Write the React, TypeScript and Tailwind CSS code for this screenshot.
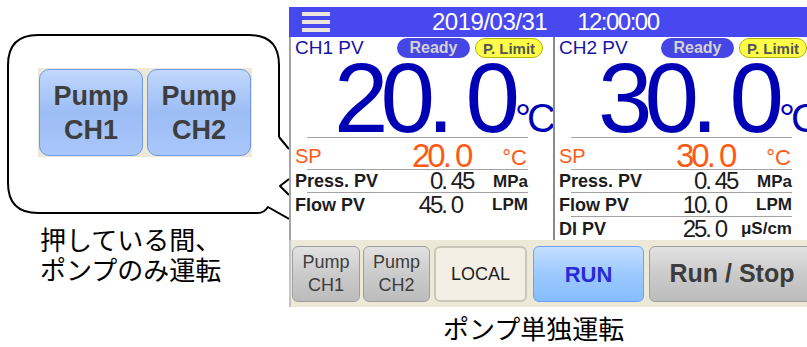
import React from "react";

type Row = { label: string; int: string; frac: string; unit: string };

const screenFont = "font-['Liberation_Sans',Arial,sans-serif]";
const jpFont = "font-['Noto_Sans_CJK_JP','Noto_Sans',sans-serif]";

const Sep = () => <div className="ml-[16px] w-[221px] h-px bg-[#a2a2a2] shrink-0" />;

const Panel = ({ name, pv, sp, rows }: { name: string; pv: string; sp: string; rows: Row[] }) => {
  return (
    <div className="w-[262px] shrink-0 flex flex-col bg-white">
      <div className="h-[22px] flex items-center pl-[4px] shrink-0">
        <span className="w-[102px] text-[19px] leading-[22px] text-[#1414a0]">{name}</span>
        <span className="h-[20px] w-[73px] rounded-full bg-[#4646e6] text-[#d2d2d2] text-[16px] font-bold leading-none flex items-center justify-center">
          Ready
        </span>
        <span className="ml-[5px] h-[20px] w-[68px] rounded-full bg-[#ffff48] border border-[#b4b400] text-[#555555] text-[15px] font-bold leading-none flex items-center justify-center">
          P. Limit
        </span>
      </div>
      <div className="h-[78px] flex items-baseline pl-[43px] text-[#0000b4] shrink-0">
        <span className="text-[98px] leading-[78px] tracking-[-8px] whitespace-pre">{pv}</span>
        <span className="ml-[3px] text-[40px] leading-[78px] tracking-[-4px]">°C</span>
      </div>
      <Sep />
      <div className="h-[31px] flex items-end pl-[4px] pr-[26px] text-[#ff5a14] shrink-0">
        <span className="w-[117px] text-[20px] leading-[20px] pb-[3px]">SP</span>
        <span className="text-[33px] leading-[26px] tracking-[-3px] whitespace-pre">{sp}</span>
        <span className="ml-auto text-[22px] leading-[22px]">°C</span>
      </div>
      {rows.map((r, i) => (
        <React.Fragment key={r.label}>
          <Sep />
          <div
            className={
              "flex items-center pl-[4px] pr-[25px] text-[#1c1c1c] shrink-0 " +
              (i === 0 ? "h-[22px]" : "h-[23px]")
            }
          >
            <span className="w-[123px] text-[18px] font-bold leading-none">{r.label}</span>
            <span className="w-[28px] text-right text-[24px] tracking-[-2px] leading-none whitespace-pre">{r.int}</span>
            <span className="text-[24px] tracking-[-2px] leading-none whitespace-pre">{r.frac}</span>
            <span className="ml-auto text-[17px] font-bold leading-none">{r.unit}</span>
          </div>
        </React.Fragment>
      ))}
    </div>
  );
};

const BigPump = ({ ch }: { ch: string }) => (
  <div className="w-[104px] h-[87px] rounded-[10px] border border-[#6f98e6] bg-gradient-to-b from-[#c2d8fc] via-[#9cbcf5] to-[#a9c7fb] flex flex-col items-center justify-center text-[27px] font-bold leading-[34px] text-[#3e3e3e] font-['Liberation_Sans',Arial,sans-serif]">
    <span>Pump</span>
    <span>{ch}</span>
  </div>
);

const grayBtn =
  "h-[56px] rounded-[6px] border border-[#9e9e9e] bg-gradient-to-b from-[#e2e2e2] via-[#cbcbcb] to-[#bcbcbc] flex flex-col items-center justify-center text-[#3c3c3c] shrink-0";

export default function App() {
  const ch1: Row[] = [
    { label: "Press. PV", int: "0.", frac: " 45", unit: "MPa" },
    { label: "Flow PV", int: "45.", frac: " 0", unit: "LPM" },
  ];
  const ch2: Row[] = [
    { label: "Press. PV", int: "0.", frac: " 45", unit: "MPa" },
    { label: "Flow PV", int: "10.", frac: " 0", unit: "LPM" },
    { label: "DI PV", int: "25.", frac: " 0", unit: "μS/cm" },
  ];

  return (
    <div className="w-[807px] h-[347px] bg-white flex overflow-hidden">
      {/* left: callout */}
      <div className="relative w-[289px] h-[347px] shrink-0">
        <svg className="absolute inset-0" width="289" height="347" viewBox="0 0 289 347" fill="none">
          <path
            d="M279 137 L279 65 Q279 35 249 35 L38 35 Q8 35 8 65 L8 183 Q8 213 38 213 L258 213 Q264 213 268 207 L289 219"
            stroke="#000"
            strokeWidth="2"
            strokeLinejoin="round"
          />
          <path d="M279 137 L289 149" stroke="#000" strokeWidth="2" />
          <path d="M289 179 L280 186 L289 195" stroke="#000" strokeWidth="2" strokeLinejoin="round" />
        </svg>
        <div className="relative flex flex-col pt-[68px] pl-[38px]">
          <div className="flex gap-[4px] bg-[#ece9d8] p-px w-fit">
            <BigPump ch="CH1" />
            <BigPump ch="CH2" />
          </div>
          <div className={"mt-[67px] pl-[2px] text-[26px] leading-[30px] text-black " + jpFont}>
            <div>押している間、</div>
            <div>ポンプのみ運転</div>
          </div>
        </div>
      </div>

      {/* right: screen */}
      <div className="flex flex-col w-[518px] shrink-0">
        <div className={"w-[518px] h-[300px] mt-[7px] overflow-hidden flex flex-col " + screenFont}>
          <div className="h-[30px] bg-[#4848f0] flex items-center shrink-0">
            <div className="ml-[13px] w-[28px] flex flex-col gap-[4px]">
              <div className="h-[4px] bg-[#e9e4dc]" />
              <div className="h-[4px] bg-[#e9e4dc]" />
              <div className="h-[4px] bg-[#e9e4dc]" />
            </div>
            <span className="ml-[102px] text-white text-[24px] leading-none tracking-[-0.5px]">2019/03/31</span>
            <span className="ml-[30px] text-white text-[24px] leading-none tracking-[-1.5px]">12:00:00</span>
          </div>
          <div className="h-[203px] flex border-l-2 border-[#a4a4a4] shrink-0">
            <Panel name="CH1 PV" pv="20. 0" sp="20. 0" rows={ch1} />
            <div className="w-[2px] bg-[#8a8a8a] shrink-0" />
            <Panel name="CH2 PV" pv="30. 0" sp="30. 0" rows={ch2} />
          </div>
          <div className="h-[67px] bg-[#ece9d8] border-l-2 border-[#c4c4c4] flex items-start pt-[6px] pl-px shrink-0">
            <div className={grayBtn + " w-[68px] text-[18px] leading-[23px]"}>
              <span>Pump</span>
              <span>CH1</span>
            </div>
            <div className={grayBtn + " ml-[3px] w-[67px] text-[18px] leading-[23px]"}>
              <span>Pump</span>
              <span>CH2</span>
            </div>
            <div className="ml-[4px] w-[93px] h-[56px] rounded-[6px] border-2 border-[#cac6ba] bg-[#f3efe5] flex items-center justify-center text-[18px] text-[#1e1e1e] shrink-0">
              LOCAL
            </div>
            <div className="ml-[6px] w-[111px] h-[56px] rounded-[6px] border border-[#6ea2f0] bg-gradient-to-b from-[#c4deff] via-[#9ccaff] to-[#86bcff] flex items-center justify-center text-[22px] font-bold text-[#2a2ad6] shrink-0">
              RUN
            </div>
            <div className={grayBtn + " ml-[5px] w-[166px] text-[25px] font-bold"}>Run / Stop</div>
          </div>
        </div>
        <div className={"mt-[6px] pl-[154px] text-[26px] leading-[30px] text-black " + jpFont}>ポンプ単独運転</div>
      </div>
    </div>
  );
}
